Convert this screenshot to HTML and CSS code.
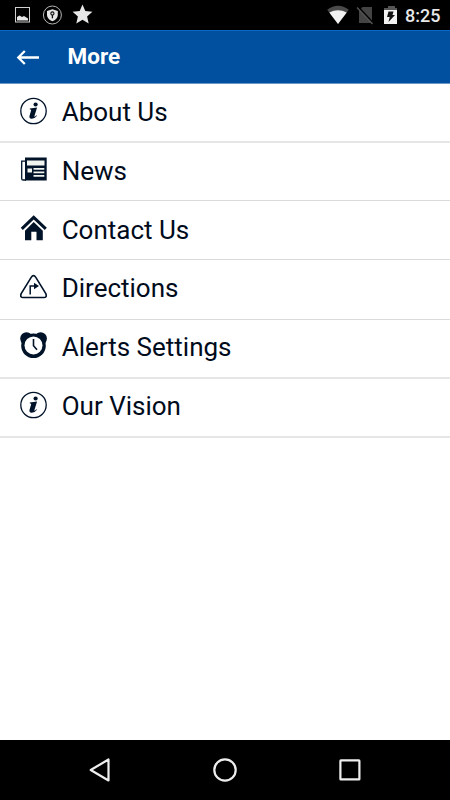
FILE: index.html
```html
<!DOCTYPE html>
<html lang="en">
<head>
<meta charset="utf-8">
<title>More</title>
<link rel="stylesheet" href="styles.css">
</head>
<body>
<div class="screen">
  <div class="status">
    <svg class="status-left" width="100" height="30" viewBox="0 0 100 30">
      <rect x="15.500" y="7.500" width="14" height="14.500" fill="none" stroke="#d0d0d0"/>
      <path d="M17 20.500v-3.500l2.500-1.500 2.500 1.500 2-1 4 2.500v2z" fill="#e6e6e6"/>
      <circle cx="52.400" cy="15" r="9" fill="none" stroke="#b5b5b5" stroke-width="1"/>
      <path d="M52.400 9.300l5.400 1.700v4c0 3-2.300 5-5.400 6.200-3.100-1.200-5.400-3.200-5.400-6.200v-4z" fill="#e6e6e6"/>
      <path d="M52.400 15v3.300" stroke="#111" stroke-width="1.300"/>
      <circle cx="52.400" cy="13.500" r="1.600" fill="#ddd" stroke="#111" stroke-width="1.100"/>
      <path d="M82.500 4.600l2.800 6.500 7.100.6-5.300 4.700 1.600 7-6.200-3.700-6.200 3.700 1.600-7-5.300-4.700 7.100-.6z" fill="#e8e8e8"/>
    </svg>
    <svg class="status-right" width="76" height="30" viewBox="0 0 76 30">
      <path d="M1.200 9.700Q12 2 22.800 9.700L12 24z" fill="#4a4a4a"/>
      <path d="M3.300 12.500Q12 8 20.700 12.500L12 24z" fill="#f2f2f2"/>
      <path d="M36.500 7H46v16H33V11z" fill="#444"/>
      <path d="M32.500 7.500L47 23" stroke="#000" stroke-width="2"/>
      <path d="M31 7.500L46.500 24" stroke="#555" stroke-width="1.400"/>
      <path d="M62 6h7v2h2v2H58V8h4z" fill="#555"/>
      <path d="M58 10h13v14H58z" fill="#f2f2f2"/>
      <path d="M62.500 11.500h5l-1 3.500h2.500L62.500 22l1.200-5H61z" fill="#111"/>
    </svg>
    <span class="clock">8:25</span>
  </div>
  <header class="bar">
    <svg width="24" height="18" viewBox="0 0 24 18"><path d="M23 9.500H2.200M8.800 3L2.300 9.500l6.500 6.500" fill="none" stroke="#fff" stroke-width="2.300"/></svg>
    <h1>More</h1>
  </header>
  <main class="list">
    <div class="row first soft">
      <svg class="icon" viewBox="0 0 28 28"><use href="#info"/></svg><span>About Us</span>
    </div>
    <div class="row">
      <svg class="icon" viewBox="0 0 28 28">
        <path d="M5 1.500h21.700v23H5z"/>
        <path d="M5 5.200H1.700v17.500q0 1.300 1.500 1.300H6" fill="none" stroke="#001329" stroke-width="1.300"/>
        <path d="M7 4.500h17.500v5H7zM7.500 12.500h4.500v4H7.500zM13.500 12h10.800v1.700H13.500zM13.500 15.500h10.800v1.700H13.500zM13.500 19h10.800v1.700H13.500z" fill="#f1f4ef"/>
      </svg><span>News</span>
    </div>
    <div class="row">
      <svg class="icon home" viewBox="0 0 28 28">
        <path d="M1.800 14.800L13.700 3.400l12.100 11.400" fill="none" stroke="#001329" stroke-width="3"/>
        <path d="M13.700 8l9.100 8.700v9.600h-6.300v-8.500h-5.200v8.500H5v-9.600z"/>
      </svg><span>Contact Us</span>
    </div>
    <div class="row tall">
      <svg class="icon" viewBox="0 0 28 28">
        <path d="M11.200 4.400q2.300-3.600 4.600 0l10 16.200q1.500 3.900-2 3.900H3.200q-3.500 0-2-3.900z" fill="none" stroke="#001329" stroke-width="1.600"/>
        <path d="M10.200 21.500v-8.400h5" fill="none" stroke="#001329" stroke-width="1.500"/>
        <path d="M14 9.800l5 3.300-5 3.200z"/>
      </svg><span>Directions</span>
    </div>
    <div class="row soft higher">
      <svg class="icon alarm" viewBox="0 0 28 28">
        <circle cx="6.500" cy="7.500" r="6.300"/><circle cx="20.600" cy="7.500" r="6.300"/>
        <path d="M6 2.500l7.500 1.300 7.500-1.300 5 8-2.500 4h-20L1 10.500z"/>
        <circle cx="13.500" cy="14.700" r="12.300"/>
        <circle cx="13.500" cy="14.400" r="9" fill="#fff"/>
        <path d="M13.500 8v6.700l3.500 4" fill="none" stroke="#001329" stroke-width="1.600"/>
      </svg><span>Alerts Settings</span>
    </div>
    <div class="row last soft">
      <svg class="icon" viewBox="0 0 28 28">
        <g id="info">
          <circle cx="13.500" cy="14" r="12.700" fill="none" stroke="#001329" stroke-width="1.300"/>
          <circle cx="15.600" cy="7.500" r="2.100"/>
          <path d="M9.800 11.500l7.300-.9-2.700 8.400q-.2 1 .7.500l1.300-1.300.6.500q-2.500 3.200-5.500 3-2.800-.3-1.900-3.200l1.500-5q.2-1-.6-1.100h-.7z"/>
        </g>
      </svg><span>Our Vision</span>
    </div>
  </main>
  <nav class="nav">
    <svg width="24" height="26" viewBox="0 0 24 26"><path d="M20.500 2.500v21L2.700 13z"/></svg>
    <svg width="26" height="26" viewBox="0 0 26 26"><circle cx="13" cy="13" r="10.700"/></svg>
    <svg width="24" height="26" viewBox="0 0 24 26"><rect x="2.400" y="3.400" width="19" height="19" rx=".5"/></svg>
  </nav>
</div>
</body>
</html>
```

FILE: styles.css
```css
* { box-sizing: border-box; }
body { margin: 0; font-family: Roboto, sans-serif; background: #fff; }
svg { display: block; flex: none; }
.screen { width: 450px; height: 800px; display: flex; flex-direction: column; }
.status { height: 30px; background: #000; display: flex; }
.status-right { margin-left: 226px; }
.clock { margin-left: 3px; font-size: 18px; line-height: 31px; font-weight: 500; color: #e8e8e8; }
.bar { height: 54px; background: #00509f; border-top: 1px solid #0768c5; border-bottom: 1px solid #6996c5; display: flex; align-items: center; padding-left: 16px; }
.bar h1 { margin: 0 0 2px 27.500px; font-size: 22.500px; line-height: 26px; font-weight: 700; color: #fff; }
.list { flex: 1; }
.row { height: 59px; display: flex; align-items: center; padding-left: 20px; border-bottom: 1px solid #dadada; font-size: 26px; line-height: 32px; color: #000b1c; }
.row.soft { border-bottom: 2px solid #e6e6e6; }
.row.first { height: 58.500px; }
.row.first + .row { height: 58.500px; }
.row.tall { height: 60px; padding-bottom: 3px; }
.row.higher { padding-bottom: 3px; }
.row.last { padding-bottom: 3px; }
.row span { margin-left: 13.700px; }
.icon { width: 28px; height: 28px; fill: #001329; position: relative; top: -1px; }
.icon.home, .icon.alarm { top: -2px; }
.nav { height: 60px; background: #000; display: flex; justify-content: space-between; align-items: center; padding: 0 88px; }
.nav svg { fill: none; stroke: #eee; stroke-width: 2.200; stroke-linejoin: round; }
```
